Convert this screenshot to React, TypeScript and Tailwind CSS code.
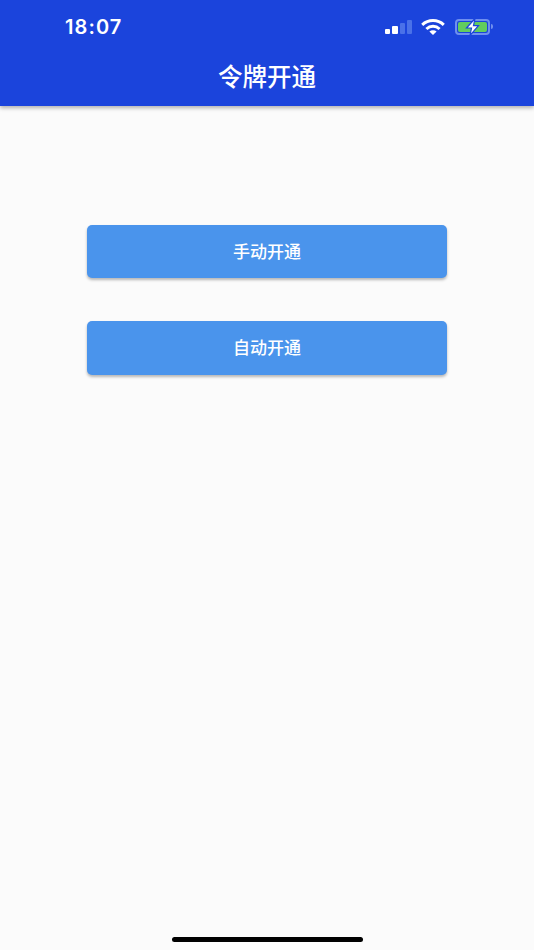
const cjk = { fontFamily: '"Noto Sans CJK SC", "Noto Sans", sans-serif' };

function StatusIcons() {
  return (
    <div className="flex items-center">
      <div className="flex items-end gap-[2px] h-[15px]">
        <div className="w-[5px] h-[5px] bg-white rounded-[1px]" />
        <div className="w-[6px] h-[8px] bg-white rounded-[1px]" />
        <div className="w-[5px] h-[11px] bg-[#4a71e8] rounded-[1px]" />
        <div className="w-[5px] h-[14px] bg-[#4a71e8] rounded-[1px]" />
      </div>
      <svg width="24" height="16" viewBox="0 0 24 16" className="ml-[9px]" fill="none">
        <path d="M1.2 5.8C7.4 0.2 16.6 0.2 22.8 5.8" stroke="#fff" strokeWidth="3" />
        <path d="M5.4 10C9.2 6.4 14.8 6.4 18.6 10" stroke="#fff" strokeWidth="3" />
        <path d="M12 16L8.4 12.4C10.4 10.8 13.6 10.8 15.6 12.4Z" fill="#fff" />
      </svg>
      <div className="ml-[10px] flex items-center">
        <div className="w-[35px] h-[16px] rounded-[4px] border-2 border-[#6f8fee] p-[1px]">
          <div className="relative w-full h-full bg-[#62cc5e] rounded-[2px]">
            <svg width="15" height="18" viewBox="0 0 15 18" className="absolute left-[7px] top-[-4px]">
              <path d="M10 0.5L1.5 10H6.5L5 17.5L13.5 7.6H8.5Z" fill="#fff" stroke="#1b44dc" strokeWidth="1.2" />
            </svg>
          </div>
        </div>
        <div className="ml-[1px] w-[2px] h-[5px] rounded-r-[2px] bg-[#6f8fee]" />
      </div>
    </div>
  );
}

function OpenButton({ label }: { label: string }) {
  return (
    <button
      type="button"
      className="w-[360px] h-[53.5px] pb-[2px] rounded-[5px] bg-[#4a94ec] text-white text-[17px] font-medium shadow-[0_2px_3px_rgba(0,0,0,0.28)]"
      style={cjk}
    >
      {label}
    </button>
  );
}

export default function App() {
  return (
    <div className="w-[534px] h-[950px] flex flex-col bg-[#fbfbfb] overflow-hidden">
      <header className="h-[106px] bg-[#1b44dc] text-white shadow-[0_2px_4px_rgba(0,0,0,0.3)]">
        <div className="h-[53px] pl-[65px] pr-[41px] flex items-center justify-between">
          <span className="text-[20px] font-semibold tracking-[1.1px]" style={{ fontFamily: 'Inter, sans-serif' }}>
            18:07
          </span>
          <StatusIcons />
        </div>
        <h1 className="text-center text-[24.5px] leading-[46px] font-medium" style={cjk}>
          令牌开通
        </h1>
      </header>
      <main className="flex-1 flex flex-col items-center gap-[43px] pt-[118.6px]">
        <OpenButton label="手动开通" />
        <OpenButton label="自动开通" />
      </main>
      <div className="flex justify-center pb-[8px]">
        <div className="w-[191px] h-[5px] rounded-full bg-black" />
      </div>
    </div>
  );
}
